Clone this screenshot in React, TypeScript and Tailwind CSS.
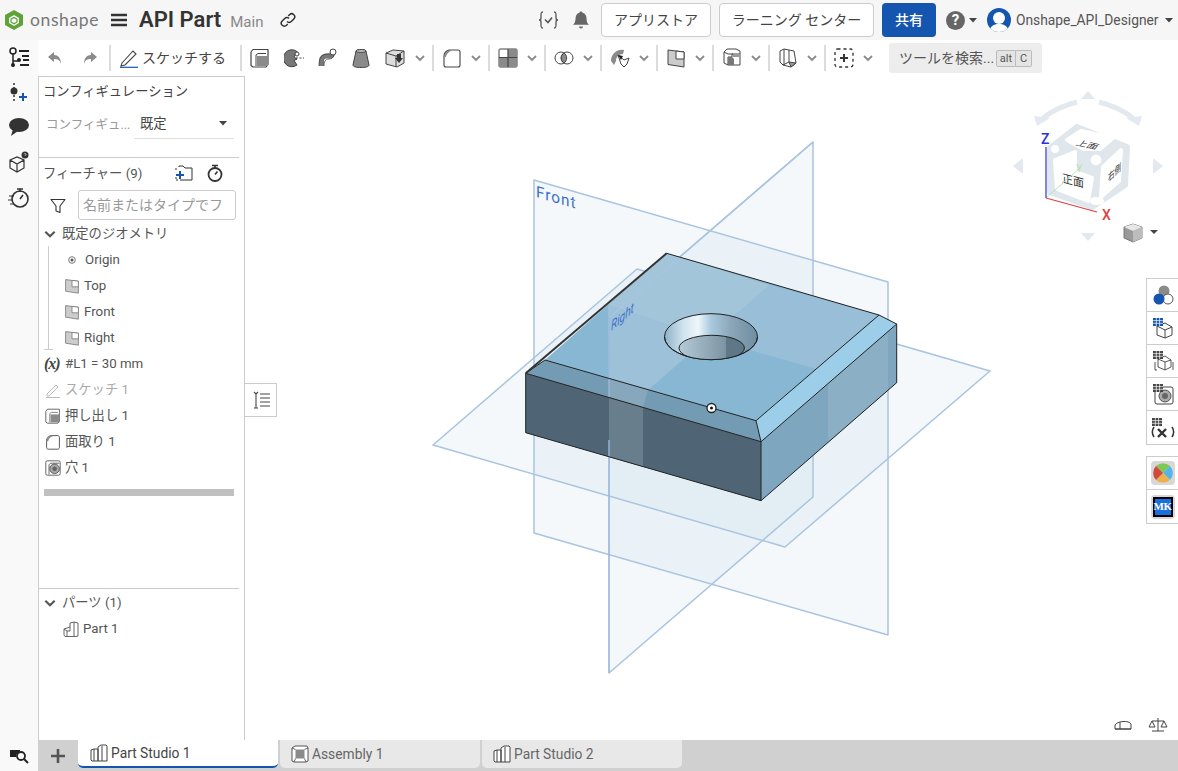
import React from "react";

const Ic = ({ w = 20, h = 20, vb, children, className = "" }: { w?: number; h?: number; vb?: string; children: React.ReactNode; className?: string }) => (
  <svg width={w} height={h} viewBox={vb ?? `0 0 ${w} ${h}`} fill="none" className={`shrink-0 ${className}`}>{children}</svg>
);
const D = "#444";

const Chevron = ({ c = "#8a8a8a", s = 12 }: { c?: string; s?: number }) => (
  <svg width={s} height={s} viewBox="0 0 12 12" fill="none" className="shrink-0"><path d="M2 4l4 4 4-4" stroke={c} strokeWidth="1.800" /></svg>
);
const Caret = ({ c = "#444" }: { c?: string }) => (
  <svg width="8" height="5" viewBox="0 0 8 5" className="shrink-0"><path d="M0 0h8L4 4.500z" fill={c} /></svg>
);

const Extrude = ({ s = 20, stroke = D }: { s?: number; stroke?: string }) => (
  <Ic w={s} h={s} vb="0 0 20 20"><path d="M1 4l2-2.500h15v15l-2 2.500H3l-2-1.500z" stroke={stroke} strokeWidth="1.200" strokeLinejoin="round" /><path d="M6 18V7l2-1.500h8" stroke={stroke} /><rect x="7" y="8" width="11" height="10" fill="#8a8a8a" /></Ic>
);
const Revolve = () => (
  <Ic vb="0 0 20 20"><path d="M13 3.500A8.500 8.500 0 1 0 13 17l-3-4.500 3-1.500-3-2z" fill="#777" stroke={D} /><circle cx="13" cy="6" r="2" fill="#fff" stroke={D} /><path d="M12 10h8" stroke={D} strokeDasharray="2 1.500" /></Ic>
);
const Sweep = () => (
  <Ic vb="0 0 20 20"><path d="M3.500 18v-5c0-3 2-5 5-5h3c2 0 3-1 3-3" stroke="#777" strokeWidth="5" /><path d="M1 18c0-6 1-12 9-12h2M6 18c0-4 1-7 5-7 3 0 5-2 5-5" stroke={D} strokeWidth=".8" /><circle cx="15" cy="4" r="3" fill="#fff" stroke={D} /></Ic>
);
const Loft = () => (
  <Ic vb="0 0 20 20"><path d="M5 3c0-2 10-2 10 0l3 14c0 2-4 2.500-8 2.500s-8-.5-8-2.500z" fill="#8a8a8a" stroke={D} /><ellipse cx="10" cy="3" rx="5" ry="1.400" fill="#ccc" stroke={D} /></Ic>
);
const Thicken = () => (
  <Ic vb="0 0 20 20"><path d="M1 5l7-3 11 1v12l-7 4-11-3z" fill="#ddd" stroke={D} /><path d="M1 5l10 3 8-5M11 8v11" stroke={D} /><path d="M12 6h4v4h2l-4 5-4-5h2z" fill="#333" /></Ic>
);
const Chamfer = ({ s = 20 }: { s?: number }) => (
  <Ic w={s} h={s} vb="0 0 20 20"><path d="M2 8c0-3 2-5 5-6h9c1 0 2 1 2 2v13c0 1-1 2-2 2H4c-1 0-2-1-2-2z" stroke={D} strokeWidth="1.100" fill="#fff" /><path d="M2 9c0-3 3-6 6-7l2 .5C6 4 4 7 4 9z" fill="#888" /></Ic>
);
const Pattern = () => (
  <Ic vb="0 0 20 20"><rect x="1" y="1" width="18" height="18" rx="1" fill="#fff" stroke={D} /><rect x="10" y="1" width="9" height="8" fill="#8a8a8a" /><rect x="1" y="10" width="18" height="9" fill="#8a8a8a" /><path d="M10 1v18M1 9.500h18" stroke={D} strokeWidth="1.200" /></Ic>
);
const Bool = () => (
  <Ic vb="0 0 20 20"><circle cx="7" cy="10" r="6" stroke={D} fill="#fff" /><circle cx="13" cy="10" r="6" stroke={D} fill="#fff" /><path d="M10 5a6 6 0 0 1 0 10 6 6 0 0 1 0-10z" fill="#8a8a8a" stroke={D} /></Ic>
);
const Transform = () => (
  <Ic vb="0 0 20 20"><path d="M1 13C1 6 7 1 14 2l-1 4c-4 0-7 3-7 7l-2 4z" fill="#8a8a8a" /><path d="M8 7l6 5 5-2-2 6-3 3-3-3z" fill="#fff" stroke={D} /><path d="M8 7l5 1-2 4z" fill="#222" /></Ic>
);
const Plane = ({ s = 20, f = "#ccc", c = D }: { s?: number; f?: string; c?: string }) => (
  <Ic w={s} h={s} vb="0 0 20 20"><path d="M2 2l16 2v15L2 16.500z" fill={f} stroke={c} /><path d="M10 3l8 1v7h-8z" fill="#fff" stroke={c} /></Ic>
);
const Frame = () => (
  <Ic vb="0 0 20 20"><path d="M2 4l3-3h9l4 2v14H6l-4-2z" fill="#fff" stroke={D} /><path d="M6 17V9h4V6h8M2 4l4 2h5" stroke={D} /><path d="M6 9h4l2 2v6H6z" fill="#777" /><path d="M11 6h7v3h-7z" fill="#999" /></Ic>
);
const Surface = () => (
  <Ic vb="0 0 20 20"><path d="M2 3l4-2 5 1v12l-6 3-3-3z" fill="#fff" stroke={D} /><path d="M11 2l5 1 2 12-5 4-8-2" stroke={D} /><path d="M11 14l7 1-5 4z" fill="#999" stroke={D} /><path d="M6 1v16" stroke={D} /></Ic>
);
const Custom = () => (
  <Ic vb="0 0 20 20"><rect x="1" y="1" width="18" height="18" rx="2.500" stroke="#333" strokeWidth="1.300" strokeDasharray="3 3" /><path d="M10 6v8M6 10h8" stroke="#333" strokeWidth="2" /></Ic>
);
const Hole = ({ s = 16 }: { s?: number }) => (
  <Ic w={s} h={s} vb="0 0 20 20"><rect x="1" y="1" width="18" height="18" rx="2" fill="#fff" stroke={D} /><path d="M5 18V6l2-2h11" stroke={D} /><circle cx="12" cy="11" r="6" fill="#aaa" stroke={D} /><circle cx="12" cy="11" r="3" fill="#666" /></Ic>
);

const tools: React.ReactNode[] = [<Chamfer />, <Pattern />, <Bool />, <Transform />, <Plane />, <Frame />, <Surface />, <Custom />];

const Sep = () => <div className="w-[2px] h-[26px] bg-[#dcdcdc] shrink-0" />;

const Row = ({ icon, children, pad = "pl-[6px]", gap = "gap-[4px]", color = "text-[#555]" }: { icon?: React.ReactNode; children: React.ReactNode; pad?: string; gap?: string; color?: string }) => (
  <div className={`h-[26px] pt-[2px] flex items-center ${pad} ${gap} ${color} text-[13.3px] whitespace-nowrap`}>
    {icon}
    <span>{children}</span>
  </div>
);

const Tab = ({ icon, label, active }: { icon: React.ReactNode; label: string; active?: boolean }) => (
  <div className={`w-[200px] h-[28px] flex items-center gap-[3px] rounded-b-[5px] text-[13.8px] whitespace-nowrap ${active ? "pl-[12px] bg-white text-[#444] border-b-2 border-[#1455b0]" : "pl-[11px] bg-[#e8e8e8] text-[#666]"}`}>
    {icon}
    <span>{label}</span>
  </div>
);

const StudioIcon = () => (
  <Ic w={18} h={18} vb="0 0 18 18"><path d="M1 6l3-1h4v12H2l-1-1zM8 3l3-2h5l1 1v15h-9z" fill="#fff" stroke={D} /><path d="M4 5v12M12 2v15" stroke={D} /></Ic>
);
const AssemblyIcon = () => (
  <Ic w={18} h={18} vb="0 0 18 18"><path d="M1 3l3-2h12l1 2v13l-2 1H3l-2-1z" fill="#fff" stroke={D} strokeWidth=".9" /><rect x="4.500" y="4.500" width="9" height="9" fill="#8a8a8a" /><path d="M1 3l3.500 1.500M17 3l-3.500 1.500M3 17l1.500-3.500M15 17l-1.500-3.500" stroke={D} strokeWidth=".8" /></Ic>
);

const Scene = () => (
  <svg viewBox="245 76 933 664" width="933" height="664" className="absolute left-0 top-0" fill="none">
    <defs>
      <linearGradient id="hOut" x1="0" x2="1" y1="0" y2="0">
        <stop offset="0" stopColor="#8fb2c8" /><stop offset=".2" stopColor="#cfe2ee" /><stop offset=".36" stopColor="#eef6fb" /><stop offset=".5" stopColor="#a9c9dd" /><stop offset=".72" stopColor="#8aa5b7" /><stop offset="1" stopColor="#6f8ea2" />
      </linearGradient>
      <linearGradient id="hIn" x1="0" x2="1" y1="0" y2="0">
        <stop offset="0" stopColor="#b4cad8" /><stop offset=".72" stopColor="#7c93a3" /><stop offset=".72" stopColor="#5f7888" /><stop offset="1" stopColor="#5f7888" />
      </linearGradient>
      <clipPath id="hClip"><ellipse cx="711" cy="336.700" rx="46.500" ry="23" /></clipPath>
    </defs>
    <g fill="#b4cde6" fillOpacity=".15" stroke="#a9c4e0" strokeWidth="1.500" strokeLinejoin="round">
      <path d="M534 180L888 282V635L534 533z" />
      <path d="M433 445L637 269L990 371L785 547z" />
      <path d="M813 142V497L609 673V318z" />
    </g>
    <text transform="matrix(.96 .277 0 1 536 197)" fontFamily="Roboto, sans-serif" fontSize="16" fill="#3e70c8" letterSpacing="1">Front</text>
    <path d="M545 360L666.700 253.300L879 315L756 420.700z" fill="#88b7d4" />
    <path d="M608 305L666.700 253.300L770 285L708 338z" fill="#a3c5da" />
    <path d="M770 285L879 315L820 370L708 338z" fill="#98bfd7" />
    <path d="M608 305L708 338L648 390L609 378.400z" fill="#9cc1d9" />
    <path d="M525.700 373.300L545 360L756 420.700L761 441.700z" fill="#749bb4" />
    <path d="M609 378.400L648 390L643 407.400L609 397.500z" fill="#87a7bc" />
    <path d="M756 420.700L879 315L896.700 324L761 441.700z" fill="#9ccde9" />
    <path d="M525.700 373.300L761 441.700V500.700L525.700 432.700z" fill="#4f6575" />
    <path d="M609 397.500L643 407.400V466.800L609 457z" fill="#697e8d" />
    <path d="M761 441.700L896.700 324V382.700L761 500.700z" fill="#7ea6bf" />
    <path d="M828 383.500L888 331.600V390L828 442.400z" fill="#8bafc5" />
    <path d="M813 142L609 318" stroke="#a9c4e0" strokeWidth="1.500" />
    <path d="M609 318V397M609 440V673" stroke="#9dbbdc" strokeWidth="1.300" />
    <path d="M525.700 373.300L761 441.700V500.700L525.700 432.700zM761 441.700L896.700 324V382.700L761 500.700M879 315L896.700 324M756 420.700L879 315M545 360L756 420.700L761 441.700M545 360L525.700 373.300M666.700 253.300L879 315" stroke="#222" strokeWidth="1" strokeLinejoin="round" />
    <path d="M525.700 373.300L666.700 253.300" stroke="#333" strokeWidth="2" />
    <ellipse cx="711" cy="336.700" rx="46.500" ry="23" fill="url(#hOut)" stroke="#222" />
    <ellipse cx="711.700" cy="348" rx="32.700" ry="12.700" fill="url(#hIn)" stroke="#222" clipPath="url(#hClip)" />
    <path d="M664.500 336.700a46.500 23 0 0 0 93 0" stroke="#222" />
    <text transform="matrix(.76 -.65 0 1 611 331)" fontFamily="Roboto, sans-serif" fontStyle="italic" fontSize="13.500" fill="#3e70c8">Right</text>
    <circle cx="711.500" cy="408" r="4.500" fill="#fff" stroke="#222" strokeWidth="1.300" />
    <circle cx="711.500" cy="408" r="1.500" fill="#111" />

    <g fill="#e3e9ee">
      <path d="M1088 91l7 8h-14zM1088 241l7-8h-14zM1013 166l10-8v16zM1163 166l-10-8v16z" />
      <path d="M1034 116l16 2-13 8zM1142 116l-16 2 13 8z" />
    </g>
    <path d="M1043 118Q1057 107 1077 102M1133 118Q1119 107 1099 102" stroke="#e3e9ee" strokeWidth="5" />
    <path d="M1077 127L1127 147L1125 185L1092 207L1050 192L1050 148z" fill="#dfe6ec" stroke="#dfe6ec" strokeWidth="6" strokeLinejoin="round" />
    <g fill="#fff" stroke="#fff" strokeWidth="4" strokeLinejoin="round">
      <path d="M1067 140L1081 131L1113 138L1100 149L1084 149z" />
      <path d="M1055 160L1075 152V172L1092 178L1088 201L1057 189z" />
      <path d="M1103 167L1121 150L1119 181L1101 197z" />
      <circle cx="1096" cy="160" r="5" strokeWidth="1" />
      <circle cx="1055" cy="149" r="2" />
      <ellipse cx="1097" cy="201" rx="5" ry="2" />
    </g>
    <g fontFamily="'Noto Sans CJK JP', sans-serif" fill="#333" fontSize="11">
      <text transform="matrix(.95 .2 -.5 .6 1075 145)">上面</text>
      <text transform="matrix(.95 .25 0 1 1062 182)" fontSize="11.500">正面</text>
      <text transform="matrix(.6 -.55 0 .95 1108 182)" fontSize="11">右側</text>
    </g>
    <path d="M1046 198L1080 168" stroke="#b6e3b6" />
    <path d="M1046 198V147" stroke="#3030d8" strokeWidth="1.200" />
    <path d="M1046 198L1097 212" stroke="#e04040" strokeWidth="1.200" />
    <g fontFamily="Roboto, sans-serif" fontSize="14" fontWeight="500">
      <text x="1041" y="144" fill="#3030d8">Z</text>
      <text x="1102" y="220" fill="#e04040">X</text>
      <text x="1076" y="172" fontSize="11" fill="#b6e3b6" fontWeight="400">Y</text>
    </g>
    <path d="M1124 227l9-3 9 3v11l-9 4-9-4z" fill="#9a9a9a" stroke="#666" strokeWidth=".8" />
    <path d="M1124 227l9-3 9 3-9 4z" fill="#e8e8e8" />
    <path d="M1133 231v11l9-4v-11z" fill="#bdbdbd" />
    <path d="M1150 230h8l-4 4z" fill="#444" />
    <g stroke="#444" fill="none">
      <path d="M1115 725c2-4 14-5 16-1v5h-16zM1120 722v7M1115 729h16" />
      <path d="M1158 718v13M1152 731h12M1152 721h12M1152 721l-3 6h6zM1164 721l-3 6h6z" />
    </g>
  </svg>
);

const SideCell = ({ children, last }: { children: React.ReactNode; last?: boolean }) => (
  <div className={`h-[33px] flex items-center justify-center ${last ? "" : "border-b border-[#ccc]"}`}>{children}</div>
);

const Grid = ({ c = "#444", x = 0, y = 0 }: { c?: string; x?: number; y?: number }) => (
  <g transform={`translate(${x} ${y})`}><rect width="10" height="8" fill={c} /><path d="M3.300 0v8M6.600 0v8M0 2.600h10M0 5.300h10" stroke="#fff" strokeWidth=".7" /></g>
);

const SidePanels = () => (
  <div className="absolute right-0 top-[202px] w-[32px] flex flex-col gap-[11px]">
    <div className="bg-white border border-r-0 border-[#ccc]">
      <SideCell>
        <Ic w={22} h={22} vb="0 0 22 22"><circle cx="12" cy="7" r="5.500" fill="#8a8a8a" /><circle cx="16" cy="15" r="5" fill="#fff" stroke="#555" /><circle cx="7" cy="15" r="5.500" fill="#1455b0" /></Ic>
      </SideCell>
      <SideCell>
        <Ic w={22} h={22} vb="0 0 22 22"><path d="M5 9l8-3 7 4v8l-7 3-8-3zM5 9l8 4 7-3M13 13v8" stroke={D} /><Grid c="#1455b0" x={1} y={1} /></Ic>
      </SideCell>
      <SideCell>
        <Ic w={22} h={22} vb="0 0 22 22"><path d="M6 9l7-3 6 4v7l-6 3-7-3zM6 9l7 3 6-2M13 12v8M3 12v8h2M21 12v8" stroke={D} strokeWidth=".9" /><Grid x={1} y={1} /></Ic>
      </SideCell>
      <SideCell>
        <Ic w={22} h={22} vb="0 0 22 22"><rect x="3" y="4" width="18" height="17" rx="2" fill="#fff" stroke={D} /><circle cx="13" cy="13" r="6" fill="#aaa" stroke="#555" /><circle cx="13" cy="13" r="3" fill="#666" /><Grid x={1} y={1} /></Ic>
      </SideCell>
      <SideCell last>
        <Ic w={24} h={22} vb="0 0 24 22"><path d="M3 10c-2 3-2 7 0 10M21 10c2 3 2 7 0 10" stroke="#333" strokeWidth="1.500" /><path d="M7 12l8 8M15 12l-8 8" stroke="#333" strokeWidth="2.400" /><Grid x={1} y={1} /></Ic>
      </SideCell>
    </div>
    <div className="bg-white border border-r-0 border-[#ccc]">
      <SideCell>
        <div className="w-[24px] h-[24px] rounded-[4px] bg-[#d8d8d8] flex items-center justify-center">
          <Ic w={20} h={20} vb="0 0 20 20"><path d="M10 10L3 3a10 10 0 0 1 14 0z" fill="#7dc955" /><path d="M10 10l7-7a10 10 0 0 1 0 14z" fill="#56b4e9" /><path d="M10 10l7 7a10 10 0 0 1-14 0z" fill="#eeb04a" /><path d="M10 10l-7 7a10 10 0 0 1 0-14z" fill="#cf4a3c" /></Ic>
        </div>
      </SideCell>
      <SideCell last>
        <div className="w-[24px] h-[24px] rounded-[4px] bg-[#d8d8d8] flex items-center justify-center">
          <div className="w-[20px] h-[20px] bg-[#1a6fe0] border-2 border-black flex items-center justify-center text-white font-bold text-[11px] leading-none tracking-[-0.5px] font-['Liberation_Serif',serif]">MK</div>
        </div>
      </SideCell>
    </div>
  </div>
);

const ViewTab = () => (
  <div className="absolute left-0 top-[307px] w-[32px] h-[34px] bg-white border border-l-0 border-[#ccc] flex items-center justify-center">
    <Ic w={20} h={20} vb="0 0 20 20"><path d="M3 2l2 2 2-2M5 4v14M3 18h4M9 4h10M9 8h10M9 12h10M9 16h10" stroke="#444" strokeWidth="1.100" /></Ic>
  </div>
);

const Rail = () => (
  <div className="w-[38px] shrink-0 bg-[#f9f9f9] flex flex-col items-center">
    <div className="h-[34px] flex items-center justify-center mt-[1px]">
      <Ic w={22} h={22} vb="0 0 22 22"><circle cx="5" cy="4" r="3" stroke="#222" strokeWidth="1.500" /><path d="M5 7v13M5 14h5" stroke="#222" strokeWidth="1.500" /><circle cx="5" cy="18" r="2" fill="#222" /><circle cx="11" cy="13" r="2" fill="#222" /><path d="M11 4h10M14 9h7M15 13h6M12 18h9" stroke="#222" strokeWidth="1.800" /></Ic>
    </div>
    <div className="h-[36px] flex items-center justify-center">
      <Ic w={22} h={22} vb="0 0 22 22"><path d="M6 1v20" stroke="#333" strokeWidth="1.500" strokeDasharray="2 2" /><circle cx="6" cy="9" r="3.500" fill="#333" /><path d="M15 11v8M11 15h8" stroke="#1455b0" strokeWidth="2" /></Ic>
    </div>
    <div className="h-[32px] flex items-center justify-center">
      <Ic w={22} h={20} vb="0 0 22 20"><ellipse cx="11" cy="8" rx="10" ry="7" fill="#333" /><path d="M5 12l-2 7 7-5z" fill="#333" /></Ic>
    </div>
    <div className="h-[38px] flex items-center justify-center">
      <Ic w={22} h={22} vb="0 0 22 22"><path d="M2 9l7-3 7 3v8l-7 4-7-4zM2 9l7 4 7-4M9 13v8" stroke="#333" strokeWidth="1.200" /><circle cx="17" cy="4" r="3.500" fill="#333" /><path d="M16 3.200c.4-1 2.200-.8 2 .4-.1.6-1 .6-1 1.300" stroke="#fff" strokeWidth=".7" /></Ic>
    </div>
    <div className="h-[34px] flex items-center justify-center">
      <Ic w={22} h={22} vb="0 0 22 22"><circle cx="12" cy="12" r="8" stroke="#333" strokeWidth="1.600" /><path d="M9 2h6M12 2v3M12 12l3-4" stroke="#333" strokeWidth="1.600" /><path d="M1 9h5M0 13h5M2 17h4" stroke="#333" /></Ic>
    </div>
    <div className="mt-auto h-[31px] flex items-center justify-center">
      <Ic w={20} h={16} vb="0 0 20 16"><path d="M1 2h10v1.500a6 6 0 0 0-4 5.500H1z" fill="#222" /><circle cx="12" cy="8" r="4" stroke="#222" strokeWidth="1.800" /><path d="M15 11l4 4" stroke="#222" strokeWidth="2" /></Ic>
    </div>
  </div>
);

const Panel = () => (
  <div className="w-[207px] shrink-0 bg-white border-x border-t border-[#ccc] flex flex-col">
    <div className="h-[81px] mr-[5px] border-b border-[#ccc] shrink-0">
      <div className="h-[30px] flex items-center pl-[4px] text-[13.3px] text-[#444] whitespace-nowrap">コンフィギュレーション</div>
      <div className="h-[30px] mt-[2px] flex items-center">
        <span className="w-[95px] pl-[7px] pt-[3px] text-[#999] text-[12.5px] whitespace-nowrap">コンフィギュ...</span>
        <div className="w-[100px] h-[30px] border-b border-[#e0e0e0] flex items-center justify-between pl-[6px] pr-[7px] text-[13.3px] text-[#444]">
          <span>既定</span><Caret />
        </div>
      </div>
    </div>
    <div className="h-[30px] shrink-0 flex items-center pl-[4px] text-[13.3px] text-[#555] whitespace-nowrap">
      <span className="pt-[1px] w-[132px]">フィーチャー (9)</span>
      <Ic w={18} h={16} vb="0 0 18 16"><path d="M4 2V1h4l2 2h7v12H5" stroke="#333" /><path d="M1 3v3M1 12v3h3" stroke="#333" strokeDasharray="2 1" /><path d="M5 6v8M1 10h8" stroke="#1455b0" strokeWidth="2" /></Ic>
      <span className="ml-[13px]">
        <Ic w={18} h={18} vb="0 0 18 18"><circle cx="9" cy="10.500" r="6.500" stroke="#333" strokeWidth="1.800" /><path d="M6 1.500h6M9 2v2M9 10.500l2.500-3" stroke="#333" strokeWidth="1.600" /></Ic>
      </span>
    </div>
    <div className="h-[30px] mt-[2px] shrink-0 flex items-center">
      <span className="ml-[11px] mt-[1px]">
        <Ic w={16} h={16} vb="0 0 16 16"><path d="M1 1.500h14L10 8v6.500l-4-1.500V8z" stroke="#333" strokeWidth="1.100" strokeLinejoin="round" /></Ic>
      </span>
      <div className="ml-[12px] w-[158px] h-[30px] border border-[#ccc] rounded-[3px] flex items-center pl-[4px] text-[14px] text-[#999] whitespace-nowrap overflow-hidden">名前またはタイプでフ</div>
    </div>
    <div className="h-[26px] pt-[1px] flex items-center gap-[5px] pl-[4px] text-[13.3px] text-[#555] whitespace-nowrap shrink-0">
      <Chevron c="#555" s={14} /><span>既定のジオメトリ</span>
    </div>
    <div className="relative ml-[9px] h-[104px] border-l border-[#ccc] shrink-0">
      <Row pad="pl-[19px]" gap="gap-[9px]" icon={<Ic w={8} h={8} vb="0 0 8 8"><circle cx="4" cy="4" r="3.300" stroke="#555" strokeWidth=".8" /><circle cx="4" cy="4" r="1.500" fill="#555" /></Ic>}>Origin</Row>
      <Row pad="pl-[15px]" icon={<Plane s={16} c="#777" />}>Top</Row>
      <Row pad="pl-[15px]" icon={<Plane s={16} c="#777" />}>Front</Row>
      <Row pad="pl-[15px]" icon={<Plane s={16} c="#777" />}>Right</Row>
      <div className="absolute left-[-5px] bottom-0 w-[9px] h-px bg-[#ccc]" />
    </div>
    <Row pad="pl-[5px]" gap="gap-[2px]" icon={<span className="text-[16px] font-bold font-['Liberation_Serif',serif] italic text-[#444] w-[19px] leading-none -tracking-[1px]">(x)</span>}>#L1 = 30 mm</Row>
    <Row color="text-[#aaa]" icon={<Ic w={16} h={16} vb="0 0 16 16"><path d="M2 12l9-9 2 2-9 9H2zM1 15.500h14" stroke="#bbb" /></Ic>}>スケッチ 1</Row>
    <Row icon={<Extrude s={16} stroke="#666" />}>押し出し 1</Row>
    <Row icon={<Chamfer s={16} />}>面取り 1</Row>
    <Row icon={<Hole />}>穴 1</Row>
    <div className="h-[7px] mt-[9px] ml-[5px] mr-[10px] bg-[#c0c0c0] shrink-0" />
    <div className="h-[93px] mr-[5px] border-b border-[#ccc] shrink-0" />
    <div className="h-[26px] pt-[1px] flex items-center gap-[5px] pl-[4px] text-[13.3px] text-[#555] whitespace-nowrap shrink-0">
      <Chevron c="#555" s={14} /><span>パーツ (1)</span>
    </div>
    <Row pad="pl-[24px]" icon={<Ic w={16} h={16} vb="0 0 16 16"><path d="M1 8l6-2V2l4-1 4 1v13l-2 .5H2l-1-1.500zM1 8l3 2h3V6M11 1v14M4 10v5" stroke="#555" strokeWidth=".9" /></Ic>}>Part 1</Row>
  </div>
);

const Toolbar = () => (
  <div className="h-[36px] shrink-0 bg-white flex items-center">
    <div className="w-[71px] flex items-center pl-[9px] gap-[19px]">
      <Ic w={16} h={14} vb="0 0 16 14"><path d="M7 1L1 6l6 5V8c4 0 6 1 7 5 0-6-3-9-7-9z" fill="#8a8a8a" /></Ic>
      <Ic w={16} h={14} vb="0 0 16 14"><path d="M9 1l6 5-6 5V8c-4 0-6 1-7 5 0-6 3-9 7-9z" fill="#8a8a8a" /></Ic>
    </div>
    <Sep />
    <div className="flex items-center gap-[3px] ml-[9px] w-[120px] text-[14px] text-[#444] whitespace-nowrap">
      <Ic w={19} h={20} vb="0 0 19 20"><path d="M2 15L13 3l3 3L5 17l-4 1z" stroke="#444" strokeWidth="1.100" /><path d="M0 19.300h18" stroke="#1455b0" strokeWidth="1.200" /></Ic>
      <span>スケッチする</span>
    </div>
    <Sep />
    <div className="w-[170px] flex items-center justify-between pl-[8px] pr-[7px]">
      <Extrude /><Revolve /><Sweep /><Loft /><Thicken />
    </div>
    <div className="w-[16px] flex justify-center mr-[4px]"><Chevron /></div>
    <Sep />
    {tools.map((t, i) => (
      <React.Fragment key={i}>
        <div className="w-[54px] flex items-center justify-between pl-[8px] pr-[6px]">{t}<Chevron /></div>
        {i < tools.length - 1 && <Sep />}
      </React.Fragment>
    ))}
    <div className="ml-[9px] w-[153px] h-[30px] rounded-[3px] bg-[#ededed] flex items-center pl-[10px] text-[14px] text-[#555] whitespace-nowrap">
      <span className="w-[97px]">ツールを検索...</span>
      <span className="h-[17px] w-[20px] text-center border border-[#bbb] rounded-l-[2px] bg-[#e4e4e4] text-[11px] leading-[15px]">alt</span>
      <span className="h-[17px] w-[16px] text-center border border-l-0 border-[#bbb] rounded-r-[2px] bg-[#e4e4e4] text-[11px] leading-[15px]">C</span>
    </div>
  </div>
);

const TopBar = () => (
  <div className="h-[40px] shrink-0 bg-[#f6f6f6] flex items-center pl-[4px] pr-[5px] whitespace-nowrap">
    <Ic w={20} h={22} vb="0 0 20 22"><path d="M10 1l9 5v10l-9 5-9-5V6z" fill="#5fa338" /><path d="M10 6l5 3v5l-5 3-5-3V9z" fill="#f6f6f6" /><path d="M10 8.500l3 1.700v2.800l-3 1.700-3-1.700v-2.800z" stroke="#5fa338" strokeWidth="1.200" fill="none" /></Ic>
    <span className="ml-[6px] w-[75px] text-[17.5px] leading-none text-[#777] font-['Lato',sans-serif] tracking-[0.6px]">onshape</span>
    <Ic w={16} h={14} vb="0 0 16 14" className="ml-[6px]"><path d="M0 2h16M0 7h16M0 12h16" stroke="#333" strokeWidth="2.400" /></Ic>
    <span className="ml-[12px] text-[22px] font-semibold text-[#333] leading-none">API Part</span>
    <span className="ml-[9px] mt-[4px] text-[15px] text-[#888] leading-none">Main</span>
    <Ic w={16} h={16} vb="0 0 16 16" className="ml-[17px]"><path d="M7 9.500a3 3 0 0 0 4.300 0l2.500-2.500a3 3 0 0 0-4.300-4.300L8.300 4M9 6.500a3 3 0 0 0-4.300 0L2.200 9a3 3 0 0 0 4.300 4.300L7.700 12" stroke="#333" strokeWidth="1.500" /></Ic>
    <div className="ml-auto flex items-center">
      <span className="flex items-center w-[20px]">
        <Ic w={21} h={20} vb="0 0 21 20"><path d="M5 2C3 2 3 3 3 5v3c0 1-1 2-2 2 1 0 2 1 2 2v3c0 2 0 3 2 3M16 2c2 0 2 1 2 3v3c0 1 1 2 2 2-1 0-2 1-2 2v3c0 2 0 3-2 3" stroke="#555" strokeWidth="1.300" /><path d="M7 9.500l3 3 4-5" stroke="#555" strokeWidth="1.600" /></Ic>
      </span>
      <span className="ml-[14px]">
        <Ic w={18} h={20} vb="0 0 18 20"><path d="M9 1.500c1 0 1.500.5 1.500 1.200 3 .8 4 3 4 6 0 3 1 4.800 2.500 6H1c1.500-1.200 2.500-3 2.500-6 0-3 1-5.200 4-6C7.500 2 8 1.500 9 1.500z" fill="#666" /><path d="M7 16.500a2 2 0 0 0 4 0z" fill="#666" /></Ic>
      </span>
      <div className="ml-[11px] w-[110px] h-[34px] border border-[#ccc] rounded-[4px] bg-white flex items-center justify-center text-[14px] text-[#444]">アプリストア</div>
      <div className="ml-[8px] w-[155px] h-[34px] border border-[#ccc] rounded-[4px] bg-white flex items-center justify-center text-[14px] text-[#444]">ラーニング センター</div>
      <div className="ml-[8px] w-[54px] h-[34px] rounded-[4px] bg-[#1455b0] flex items-center justify-center text-[14px] font-medium text-white">共有</div>
      <span className="ml-[10px] w-[19px] h-[19px] rounded-full bg-[#666] text-white flex items-center justify-center text-[15px] font-bold leading-none">?</span>
      <span className="ml-[4px]"><Caret /></span>
      <div className="ml-[10px] w-[24px] h-[24px] rounded-full bg-[#1455b0] overflow-hidden relative shrink-0">
        <Ic w={24} h={24} vb="0 0 24 24"><circle cx="12" cy="10" r="6" fill="#fff" /><path d="M2 26c0-7 4-10 10-10s10 3 10 10z" fill="#fff" /></Ic>
      </div>
      <span className="ml-[5px] w-[144px] text-[13.8px] text-[#555]">Onshape_API_Designer</span>
      <span className="ml-[5px]"><Caret /></span>
    </div>
  </div>
);

export default function App() {
  return (
    <div className="w-[1178px] h-[771px] overflow-hidden flex flex-col bg-white font-['Roboto','Noto_Sans_CJK_JP',sans-serif]">
      <TopBar />
      <div className="flex-1 min-h-0 flex">
        <Rail />
        <div className="flex-1 min-w-0 flex flex-col">
          <Toolbar />
          <div className="flex-1 min-h-0 flex">
            <Panel />
            <div className="relative flex-1 min-w-0 bg-white">
              <Scene />
              <ViewTab />
              <SidePanels />
            </div>
          </div>
          <div className="h-[31px] shrink-0 bg-[#d0d0d0] flex items-start">
            <div className="w-[40px] h-[31px] flex items-center justify-center">
              <Ic w={16} h={16} vb="0 0 16 16"><path d="M8 1v14M1 8h14" stroke="#555" strokeWidth="2.600" /></Ic>
            </div>
            <Tab active icon={<StudioIcon />} label="Part Studio 1" />
            <div className="ml-[2px]"><Tab icon={<AssemblyIcon />} label="Assembly 1" /></div>
            <div className="ml-[2px]"><Tab icon={<StudioIcon />} label="Part Studio 2" /></div>
          </div>
        </div>
      </div>
    </div>
  );
}
